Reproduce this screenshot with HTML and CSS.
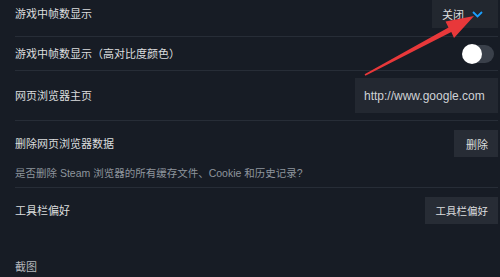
FILE: index.html
```html
<!DOCTYPE html>
<html lang="zh-CN">
<head>
<meta charset="utf-8">
<title>设置</title>
<link rel="stylesheet" href="styles.css">
</head>
<body>
<div class="page">
  <div class="row row-fps">
    <span class="label">游戏中帧数显示</span>
    <div class="dropdown">
      <span>关闭</span>
      <svg class="chev" width="11" height="7" viewBox="0 0 11 7"><path d="M1 1 L5.5 5.5 L10 1" fill="none" stroke="#1a9fff" stroke-width="1.8"/></svg>
    </div>
  </div>
  <div class="row row-contrast">
    <span class="label">游戏中帧数显示（高对比度颜色）</span>
    <div class="toggle"><div class="knob"></div></div>
  </div>
  <div class="row row-home">
    <span class="label">网页浏览器主页</span>
    <div class="input">http://www.google.com</div>
  </div>
  <div class="row-block row-clear">
    <div class="row-head">
      <span class="label">删除网页浏览器数据</span>
      <div class="btn btn-del">删除</div>
    </div>
    <div class="desc">是否删除 Steam 浏览器的所有缓存文件、Cookie 和历史记录?</div>
  </div>
  <div class="row-block row-toolbar">
    <div class="row-head">
      <span class="label">工具栏偏好</span>
      <div class="btn btn-tool">工具栏偏好</div>
    </div>
  </div>
  <div class="section">截图</div>
</div>
<svg class="arrow" width="500" height="277" viewBox="0 0 500 277">
  <polygon points="364.6,74.3 448.5,27.5 445.5,21.5 474,16 454,38 451.3,32 365.4,75.7" fill="#e8383a"/>
</svg>
</body>
</html>
```
FILE: styles.css
```css
html, body {
  margin: 0;
  padding: 0;
  background: #171c25;
  width: 500px;
  height: 277px;
  overflow: hidden;
}
body {
  font-family: "Liberation Sans", "Noto Sans CJK SC", sans-serif;
  font-size: 11px;
  color: #dcdedf;
  position: relative;
}
.page {
  padding: 0 2px 0 15px;
}
.label {
  line-height: 16px;
}
.row {
  display: flex;
  align-items: center;
  justify-content: space-between;
  border-bottom: 1px solid #272d37;
}
.row-fps {
  height: 36px;
  align-items: flex-start;
}
.row-fps .label {
  margin-top: 6px;
}
.dropdown {
  height: 28px;
  box-sizing: border-box;
  display: flex;
  align-items: center;
  gap: 8px;
  padding: 0 15px 0 10px;
  background: #22272f;
  color: #dcdedf;
}
.chev {
  display: block;
}
.row-contrast {
  height: 33px;
}
.toggle {
  width: 31px;
  height: 18px;
  border-radius: 9px;
  background: #3a404a;
  margin-right: 4px;
  position: relative;
}
.knob {
  width: 20px;
  height: 20px;
  border-radius: 50%;
  background: #ffffff;
  position: absolute;
  left: -1px;
  top: -1px;
}
.row-home {
  height: 49px;
}
.input {
  width: 143px;
  height: 35px;
  box-sizing: border-box;
  padding-left: 9px;
  display: flex;
  align-items: center;
  background: #232831;
  color: #cfd2d6;
  font-size: 12px;
}
.row-block {
  border-bottom: 1px solid #272d37;
}
.row-clear {
  padding: 9px 0 6px;
}
.row-head {
  display: flex;
  align-items: center;
  justify-content: space-between;
}
.btn {
  height: 27px;
  box-sizing: border-box;
  display: flex;
  align-items: center;
  background: #272c35;
  color: #dcdedf;
}
.btn-del {
  padding: 0 10px 0 12px;
}
.btn-tool {
  padding: 0 10px 0 11px;
  font-size: 10.5px;
}
.desc {
  margin-top: 8px;
  line-height: 16px;
  font-size: 10.5px;
  color: #8e959d;
}
.row-toolbar {
  padding: 9px 0 0;
  border-bottom: none;
}
.section {
  margin-top: 35px;
  line-height: 16px;
  color: #b5b9bd;
}
.arrow {
  position: absolute;
  left: 0;
  top: 0;
  pointer-events: none;
}
```
